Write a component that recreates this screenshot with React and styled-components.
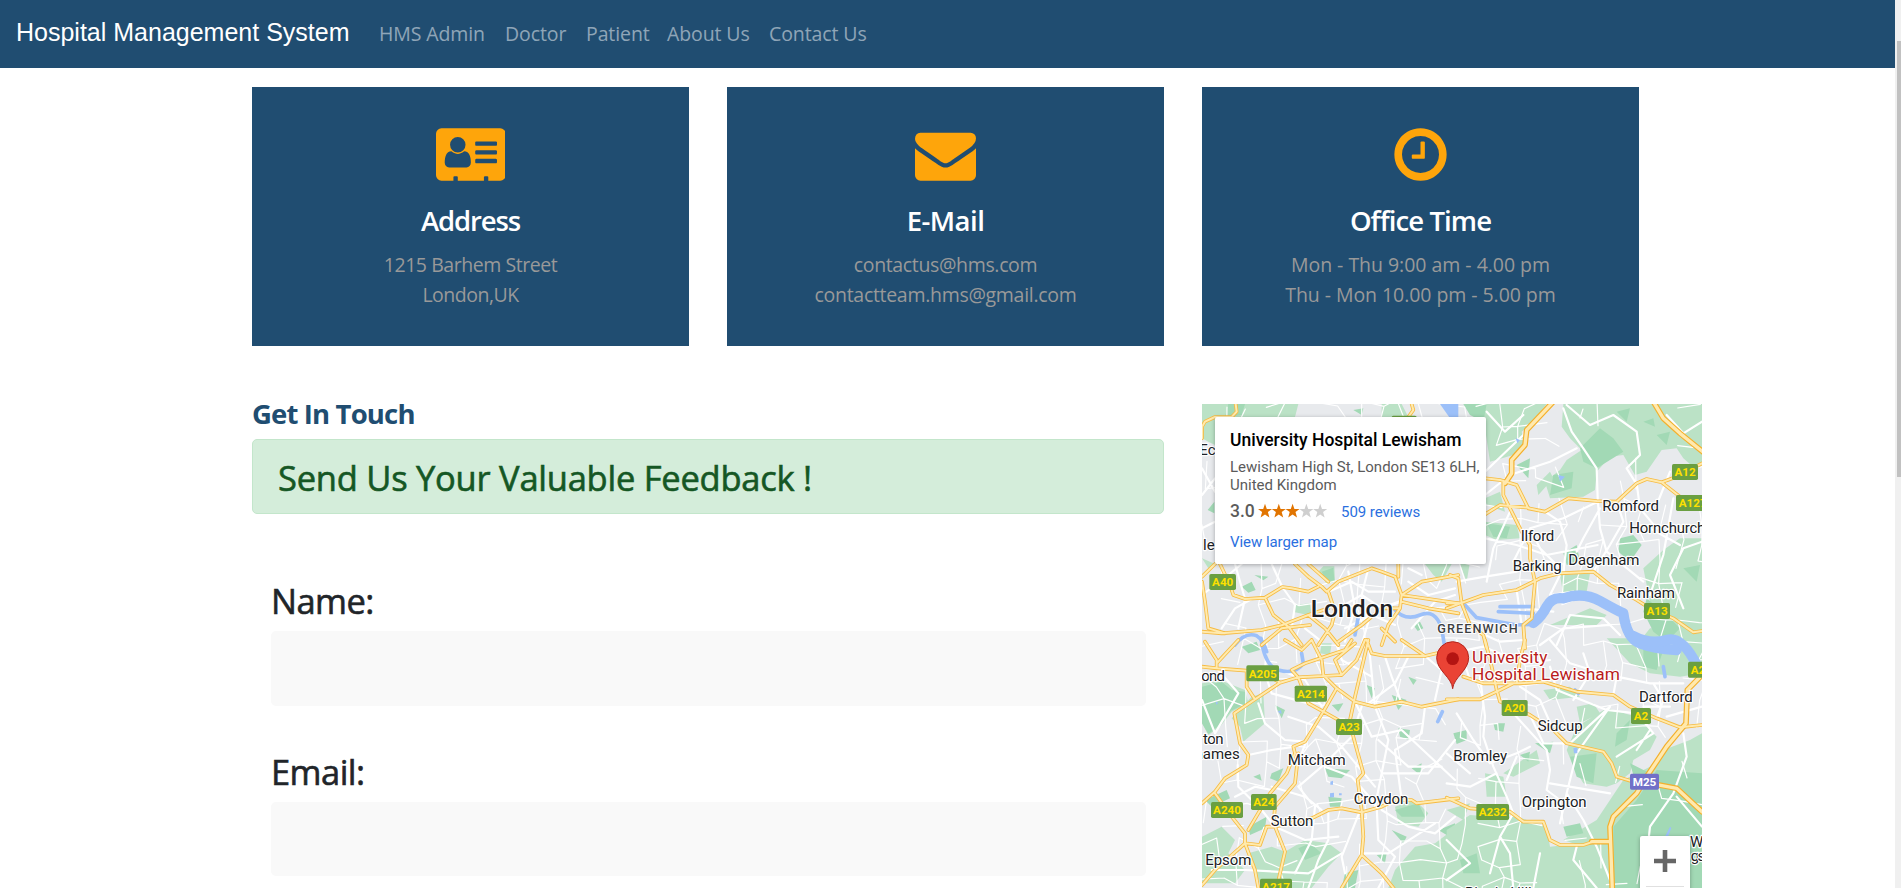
import React from "react";
import styled, { createGlobalStyle } from "styled-components";

const GlobalStyle = createGlobalStyle`
  *, *::before, *::after { box-sizing: border-box; }
  html, body { margin: 0; height: 100%; overflow: hidden; background: #fff; }
  body { font-family: "Open Sans", "Noto Sans", sans-serif; color: #212529; }
`;

const NAVY = "#204d71";

const Shell = styled.div`
  display: flex;
  height: 888px;
  overflow: hidden;
`;

const Page = styled.div`
  flex: 1;
  min-width: 0;
`;

const ScrollTrack = styled.div`
  width: 6px;
  padding: 41px 0 0 2px;
  background: #f0f0f0;
`;

const ScrollThumb = styled.div`
  height: 436px;
  background: #c1c1c1;
`;

const Navbar = styled.nav`
  display: flex;
  align-items: center;
  height: 68px;
  padding: 0 16px;
  background: ${NAVY};
`;

const Brand = styled.a`
  width: 363px;
  padding-bottom: 5px;
  font: 25px/38px "Liberation Sans", Arial, sans-serif;
  color: #fff;
  white-space: nowrap;
`;

const NavLink = styled.a`
  width: ${(p) => p.$width}px;
  font-size: 19.5px;
  line-height: 30px;
  letter-spacing: -0.1px;
  color: rgba(255, 255, 255, 0.5);
  white-space: nowrap;
`;

const Content = styled.main`
  margin-left: 252px;
  padding-top: 19px;
`;

const CardRow = styled.section`
  display: flex;
  gap: 38px;
`;

const InfoCard = styled.article`
  display: flex;
  flex-direction: column;
  align-items: center;
  width: 437px;
  height: 259px;
  padding-top: 37px;
  background: ${NAVY};
  text-align: center;
`;

const CardIcon = styled.svg`
  height: 61px;
  fill: #fea50b;
`;

const CardTitle = styled.h3`
  margin: 19px 0 12px;
  font-size: 27.5px;
  font-weight: 600;
  line-height: 34px;
  letter-spacing: ${(p) => p.$spacing}px;
  color: #fff;
`;

const CardLine = styled.p`
  margin: 0;
  font-size: 19.5px;
  line-height: 30px;
  letter-spacing: ${(p) => p.$spacing}px;
  color: #999;
`;

const LowerRow = styled.section`
  display: flex;
  gap: 38px;
`;

const FormColumn = styled.div`
  width: 912px;
  padding-top: 51px;
`;

const SectionTitle = styled.h2`
  margin: 0 0 8px;
  font-size: 27.5px;
  font-weight: 700;
  line-height: 34px;
  letter-spacing: -0.85px;
  color: ${NAVY};
`;

const Alert = styled.div`
  height: 75px;
  padding: 17px 25px;
  border: 1px solid #c3e6cb;
  border-radius: 5px;
  background: #d4edda;
  font-size: 34.5px;
  line-height: 42px;
  letter-spacing: -0.25px;
  -webkit-text-stroke: 0.6px #155724;
  color: #155724;
`;

const Form = styled.form`
  display: flex;
  flex-direction: column;
  gap: 45px;
  padding: 66px 18px 0 19px;
`;

const Field = styled.label`
  display: flex;
  flex-direction: column;
  gap: 9px;
  font-size: 34.5px;
  line-height: 42px;
  letter-spacing: -0.55px;
  -webkit-text-stroke: 0.6px #212529;
`;

const Input = styled.input`
  height: 74.5px;
  border: 0;
  border-radius: 5px;
  background: #f9f9f9;
`;

const MapFrame = styled.div`
  position: relative;
  width: 500px;
  height: 484px;
  margin-top: 58px;
  overflow: hidden;
  background: #e8eaed;
`;

const MapCanvas = styled.svg`
  display: block;
  font-family: Roboto, sans-serif;
`;

const PlaceCard = styled.div`
  position: absolute;
  left: 13px;
  top: 13px;
  width: 271px;
  height: 147px;
  padding: 11px 0 0 15px;
  border-radius: 2px;
  background: #fff;
  box-shadow: 0 1px 4px rgba(0, 0, 0, 0.3);
  font-family: Roboto, sans-serif;
  white-space: nowrap;
`;

const PlaceName = styled.div`
  font-size: 17.5px;
  font-weight: 500;
  line-height: 24px;
  color: #000;
`;

const PlaceAddress = styled.div`
  margin-top: 6px;
  font-size: 15px;
  line-height: 18px;
  color: #5b5b5b;
`;

const Rating = styled.div`
  display: flex;
  align-items: center;
  margin-top: 5px;
  height: 24px;
`;

const Score = styled.span`
  width: 28px;
  font-size: 17.5px;
  font-weight: 500;
  color: #5b5b5b;
`;

const Stars = styled.svg`
  width: 70px;
  height: 16px;
`;

const MapLink = styled.a`
  display: ${(p) => (p.$block ? "block" : "inline")};
  margin-left: ${(p) => (p.$block ? 0 : 13)}px;
  margin-top: ${(p) => (p.$block ? 9 : 2)}px;
  font-size: 15px;
  line-height: 20px;
  letter-spacing: -0.05px;
  color: #2a6fe0;
`;

const ZoomControl = styled.div`
  position: absolute;
  left: 438px;
  top: 432px;
  width: 50px;
  height: 101px;
  background: #fff;
  border-radius: 2px;
  box-shadow: 0 1px 4px rgba(0, 0, 0, 0.3);
`;

const ZoomButton = styled.div`
  display: grid;
  place-items: center;
  height: 51px;
  margin: 0 6px;
  border-bottom: 1px solid #e0e0e0;
`;

const icons = {
  address: {
    w: 2048,
    d: "M1024 1131q0-64-9-117.5t-29.5-103-60.5-78-97-28.5q-6 4-30 18t-37.5 21.5-35.5 17.5-43 14.5-42 4.5-42-4.5-43-14.5-35.5-17.5-37.5-21.5-30-18q-57 0-97 28.5t-60.5 78-29.5 103-9 117.5 37 106.5 91 42.5h512q54 0 91-42.5t37-106.5zm-157-520q0-94-66.5-160.5t-160.5-66.5-160.5 66.5-66.5 160.5 66.5 160.5 160.5 66.5 160.5-66.5 66.5-160.5zm925 509v-64q0-14-9-23t-23-9h-576q-14 0-23 9t-9 23v64q0 14 9 23t23 9h576q14 0 23-9t9-23zm0-260v-56q0-15-10.5-25.5t-25.5-10.5h-568q-15 0-25.5 10.5t-10.5 25.5v56q0 15 10.5 25.5t25.5 10.5h568q15 0 25.5-10.5t10.5-25.5zm0-252v-64q0-14-9-23t-23-9h-576q-14 0-23 9t-9 23v64q0 14 9 23t23 9h576q14 0 23-9t9-23zm256-320v1216q0 66-47 113t-113 47h-352v-96q0-14-9-23t-23-9h-64q-14 0-23 9t-9 23v96h-768v-96q0-14-9-23t-23-9h-64q-14 0-23 9t-9 23v96h-352q-66 0-113-47t-47-113v-1216q0-66 47-113t113-47h1728q66 0 113 47t47 113z",
  },
  mail: {
    w: 1792,
    d: "M1792 710v794q0 66-47 113t-113 47h-1472q-66 0-113-47t-47-113v-794q44 49 101 87 362 246 497 345 57 42 92.5 65.5t94.5 48 110 24.5h2q51 0 110-24.5t94.5-48 92.5-65.5q170-123 498-345 57-39 100-87zm0-294q0 79-49 151t-122 123q-376 261-468 325-10 7-42.5 31t-54 38.8-52 32.5-57.5 27-50 9h-2q-23 0-50-9t-57.5-27-52-32.5-54-38.8-42.5-31q-91-64-262-182.5t-205-142.5q-62-42-117-115.5t-55-136.5q0-78 41.5-130t118.5-52h1472q65 0 112.5 47t47.5 113z",
  },
  clock: {
    w: 1792,
    d: "M1024 544v448q0 14-9 23t-23 9h-320q-14 0-23-9t-9-23v-64q0-14 9-23t23-9h224v-352q0-14 9-23t23-9h64q14 0 23 9t9 23zm416 352q0-148-73-273t-198-198-273-73-273 73-198 198-73 273 73 273 198 198 273 73 273-73 198-198 73-273zm224 0q0 209-103 385.5t-279.5 279.5-385.5 103-385.5-103-279.5-279.5-103-385.5 103-385.5 279.5-279.5 385.5-103 385.5 103 279.5 279.5 103 385.5z",
  },
};

const cards = [
  { icon: "address", title: "Address", ts: -1.1, lines: [["1215 Barhem Street", -0.45], ["London,UK", -0.5]] },
  { icon: "mail", title: "E-Mail", ts: -0.55, lines: [["contactus@hms.com", -0.35], ["contactteam.hms@gmail.com", -0.3]] },
  { icon: "clock", title: "Office Time", ts: -0.9, lines: [["Mon - Thu 9:00 am - 4.00 pm", -0.03], ["Thu - Mon 10.00 pm - 5.00 pm", -0.06]] },
];

const links = [
  ["HMS Admin", 126],
  ["Doctor", 81],
  ["Patient", 81],
  ["About Us", 102],
  ["Contact Us", 100],
];

/* The map is drawn in four tiles, three drawing units to a pixel. */
const tiles = [
  {
    at: [-21, -27],
    light: "M21 27H310L300 66H60V150L40 140L21 130ZM560 27H620L640 66H560ZM372 528L385 514L418 514L420 560L395 568ZM300 630L345 625L350 662L300 652ZM690 507H770L740 560L715 540ZM21 490L60 507L40 520Z",
    dark: "M100 27H150L140 60L90 66ZM140 575L170 560L182 585L160 593ZM178 540L220 545L205 556ZM38 345L58 320V355ZM655 690L675 680L685 700L668 708ZM380 530L415 518L418 555L395 562ZM475 45L505 40L500 60Z",
    water: ["M595 640Q630 680 675 660T740 700L750 760", "M490 665L480 720", "M120 750Q150 710 185 722Q205 735 215 770"],
    lakes: "M735 27H790V70H765Z",
    streets: "M21 220L60 290M21 300L60 250M21 400L60 380M21 600L100 540L140 507M80 700L120 640L170 612M400 590L470 560L520 590L600 590M430 640L500 600L560 640L620 620M450 700L530 660L600 690M330 700L380 740M640 560L700 600L780 580M640 520L680 540M520 520L500 600L520 680L500 750M460 530L480 640L450 740M120 507L150 612L130 700M230 507L262 576L300 630L290 700M650 700L720 620L780 600",
    roads: "M21 130V95L30 80L60 66L110 66L125 50L122 27M650 27L655 45L640 66M21 545L60 507M21 560L30 620L40 700L90 715M75 507L105 570L115 600L150 612L210 608L262 576L290 580L340 590L370 575M210 608L235 660L280 695L320 750M300 507L340 545L380 575L395 590L430 560L530 520L560 530L600 545L620 600L615 640L580 690L560 750M340 507L400 560M610 507V545M620 600L790 625M620 620L700 640L790 655M620 600L680 560L790 540M262 690L340 660L400 640M340 660L390 700L430 750M200 750L260 700L345 690M21 710L80 715L200 705L262 690M400 590L420 650L410 690L370 750M430 740L500 690L560 640L615 640M560 700L600 740",
    thick: "",
  },
  {
    at: [744, -27],
    light: "M45 27H290L240 90L215 110L225 150L190 180L120 200L105 100ZM340 27H756V210L740 225L700 190L680 160L635 165L590 230L555 240L520 180L480 185L440 230L435 285L400 305L300 310L285 260L330 225L350 195L395 165L360 130L335 95ZM105 310L150 290L165 350L110 330ZM105 380L200 390L210 430L140 435L105 420ZM580 520L640 465L690 430L756 430V750H560L600 700L660 700L600 620ZM260 270L300 230L310 250L265 300ZM330 540L420 535L410 590L340 600ZM300 690L420 640L470 660L440 690ZM30 507L60 500L50 560Z",
    dark: "M40 27H110L100 80L60 60ZM390 160L450 100L490 130L520 170L440 220L400 200ZM310 240L370 230L365 280L300 300ZM580 80L610 70L615 95ZM500 50L540 40L530 80ZM620 120L660 110L650 150ZM110 385L180 395L170 430L130 425ZM340 475L380 450L390 500L350 510ZM510 430L550 420L575 450L540 500L505 470ZM590 610L650 660L690 700L650 740L610 710L580 650ZM200 210L240 190L235 250ZM700 520L750 510L740 560Z",
    water: ["M45 630L80 668L200 690L240 688L275 655", "M150 635H250M145 650L250 655"],
    river: "M250 684Q275 665 290 635T340 610Q400 590 450 618T520 655Q530 730 570 745T680 765",
    lakes: "M0 27H12L20 60L0 66ZM325 240L345 245L330 260ZM197 130L210 135L202 145Z",
    streets: "M105 230L220 120L300 27M340 40L365 110L400 160L440 220L443 310L450 400L470 470L580 560M350 30L420 90L490 60L560 110L570 180L530 220L555 260M443 320L340 370L240 400L190 500M285 350L330 380L350 450L340 530M450 340L400 430L380 470M500 320L520 380L480 450L430 530M560 265L570 340L620 400M620 330L660 230M670 310L640 480L600 600M240 400L270 460L330 520M105 430L200 450L290 480L443 450M180 350L130 460L110 560M20 560L105 545L200 530M200 585L215 690M330 540L300 600L370 590M700 640L660 540L700 460L756 440M320 750L360 660L460 670L510 720M270 750L340 700L480 690M105 300L180 240L300 200L380 160M650 60L700 115L756 80M600 400L690 450M110 50L165 110L220 60M60 700L150 740L220 735M230 640L310 650",
    roads: "M105 250L150 255L200 270L235 340L285 350L355 310L440 318L500 320L560 265L590 252L635 262L680 245L756 205M635 262L690 305L700 320M105 358L150 330L235 338M160 262V300L185 350L215 410L240 450V490L255 560L245 670L220 690L225 760M-10 640L100 600L200 585L270 550L330 535L430 530L480 570L560 615L600 640L670 670L730 712L756 708M0 540L25 550L35 625L60 690L100 720L110 760M-10 625L35 625",
    thick: "M310 20L230 105L225 150L185 195V235L165 265M610 20L640 70L690 115L770 180",
  },
  {
    at: [-21, 708],
    light: "M21 130L80 122L150 150L160 190L110 215L75 260L40 285L21 250ZM110 235L170 170L205 160L210 250L145 305L135 260ZM21 590L80 560L120 600L100 640L150 690L120 730H21ZM160 640L230 620L270 635L330 600L400 610L440 640L400 680L350 744H200ZM580 744L600 690L660 620L720 610L780 565V744ZM600 500L660 480L700 520L670 560L610 550ZM380 10L410 10L405 45L375 40Z",
    dark: "M140 20L185 5L195 30L160 40ZM21 140L80 125L110 150L150 155L155 190L108 212L70 258L40 282L21 250ZM30 480L95 450L105 475L50 500ZM515 135L540 145L530 175ZM640 110L665 120L655 135ZM610 265L645 270L640 300L615 290ZM590 165L635 180L610 210ZM175 410L195 402L200 422ZM230 400L265 385L250 425L225 415ZM400 470L440 475L435 500H405ZM160 560L215 530L210 565L165 585ZM650 385L680 370L675 405ZM590 570L635 590L625 610ZM240 195L270 210L260 235ZM545 645L575 640L570 670ZM600 510L670 490L690 530L620 530ZM390 385L465 390L440 415L400 410ZM410 195L445 190L430 215ZM310 625L345 610L380 640L330 660ZM730 570L780 550V600ZM450 700L490 690L480 744H440Z",
    water: ["M198 -5Q210 80 250 90Q300 105 325 70L320 40", "M728 245L742 215"],
    lakes: "M406 425l8-3v12h-8zM405 460l12-2v14h-12zM432 460l8 0v6h-8zM62 185l8 3-6 6zM248 215l10-5 2 12z",
    streets: "M65 85L130 160L60 280M190 190L210 250L270 300L330 305M215 0L210 100L230 160L340 190M230 80L330 120L380 200M280 230L370 260L440 320L540 440M350 260L320 340M160 345L230 330L300 320M128 375L130 440L200 510L240 560M230 440L330 470L380 510M500 200L470 290L380 380L310 440L350 490M540 200L580 300L560 400L540 500M480 185L530 290L620 270L780 420M520 0L540 200M570 50L590 110L620 190M640 50L600 130L520 190M550 300L640 380L740 380M560 400L700 400L780 300M690 48L740 90L720 180M390 380L470 410L540 490M545 500L550 600L600 650L550 744M560 510L640 560L720 580L780 530M500 500L440 650L450 700M400 520L400 600L370 660L340 744M440 640L340 700L150 690L50 690M240 560L330 600L430 590M620 480L600 330L680 280L690 200M500 640L580 640L720 550M120 470L180 440L230 450M21 180L60 280M420 0L440 60L530 110M360 500L350 600L300 700",
    roads: "M21 80L65 85L155 92L200 95L255 128M30 5L65 60V85M130 0L65 70M21 490L60 455L90 415L155 375L160 345L135 310L118 220L180 178L255 128L310 112L440 105L485 60L510 0M155 92V140L180 178M350 0L380 60L385 105L425 145L480 185L540 200L620 185L680 200L790 178M310 112L340 190L385 215L430 240M425 145L385 215L330 305L295 320L300 340L275 400L225 460L160 570M310 340L300 430L240 500L235 560M520 0L480 170L465 240L475 290L505 400L488 420L500 510L505 590L500 645L440 744M500 645L560 700L600 750M60 460L110 530L150 580L150 610L180 690L190 744M150 610L195 615L215 560L240 560L300 545L350 535L400 510L440 505L500 517L560 500L600 480L650 480L665 490L790 475M240 560L270 635L245 744M150 610L60 690L21 735M515 0L530 40L570 48L690 48L725 40M620 0L690 48M310 112L290 90L330 70L450 30L470 0M270 0L320 30L350 0M440 105L420 60L480 10",
    thick: "",
  },
  {
    at: [744, 708],
    light: "M380 260L470 205L560 230L620 290L600 330L550 360L540 400L500 430L470 440L400 430L370 380L350 330ZM756 280V744H480L400 620L340 600L440 540L520 420L600 380L640 330L720 300ZM-10 570L60 525L130 530L200 530L290 560L300 620L480 600V744H-10ZM105 400L160 410L170 470L110 470ZM470 -5H756V100L690 110L600 100L540 70ZM160 400L260 330L270 370L190 410ZM380 200L430 190L450 220L390 250ZM280 150L360 140L390 170L300 180ZM-10 510L60 490L40 540Z",
    dark: "M620 390L756 400V744H490V560L560 480ZM10 280L50 270L50 300L20 312ZM180 180L220 185L210 220L180 215ZM360 350L440 340L430 430L380 410ZM540 370L600 400L560 440ZM210 345L240 335L235 365ZM500 280L540 240L530 300L495 320ZM580 20L640 30L620 90L580 80ZM340 560L390 550L400 580L350 590ZM255 310L310 305L300 340ZM130 250L165 250L160 275L135 270ZM30 660L80 640L90 700L40 700Z",
    water: ["M640 80L645 110", "M375 150L385 160"],
    river: "M550 -12Q600 15 650 0T750 95",
    lakes: "M370 325l12-3v18h-10zM640 600l20-40 4 4-14 36z",
    streets: "M90 110L105 230L100 290L130 380L170 470L190 520L150 590L120 700M190 220L290 330L300 390L290 450L330 480M20 220L70 300L120 370L200 340L240 320M240 225L280 310L360 310L480 200M480 200L380 340L350 460L400 540L440 620L480 720M300 80L320 150L470 210L560 220M490 165L500 110L600 130L700 130M560 215L610 280L500 350M700 280L710 350L670 460L600 560L580 744M680 470L756 560M300 430L480 460M150 590L180 640L190 744M-10 600L60 670L-10 720M380 620L370 660L440 744M270 640L250 744M0 40L100 20L220 70L300 60M20 0L60 120M400 40L420 100L370 180M300 0L360 70L490 110M620 235L640 180L610 130M650 230L756 200M310 270L270 180L210 140M140 400L60 440L-10 430M200 350L170 420M350 460L330 550M580 200L660 200M560 330L600 270M-10 340L60 400",
    roads: "M40 110L100 130L210 130L280 125L380 155L490 165L540 200L620 235L690 262L756 255M-10 178H90L150 150L190 130M105 0L125 80L140 150L150 185L240 225L310 270L350 310L460 335L485 370L500 410L540 422M225 0L210 60L200 130M-10 473L60 505L180 515L220 545L280 545L300 600L330 615L400 615L430 605",
    thick: "M425 605H480M756 105L712 150L708 250L650 320L590 410L560 460L490 530L480 560L487 750M600 430L680 445L756 515",
  },
];

/* label, x, width (0 = natural), baseline, city */
const places = [
  ["Ec", -8, 0, 153, 0],
  ["le", 3, 0, 438, 0],
  ["London", 326, 248, 638, 1],
  ["Romford", 1201, 170, 321, 0],
  ["Hornchurch", 1282, 228, 388, 0],
  ["Ilford", 956, 101, 411, 0],
  ["Barking", 932, 147, 500, 0],
  ["Dagenham", 1099, 213, 483, 0],
  ["Rainham", 1245, 174, 583, 0],
  ["ond", -2, 71, 830, 0],
  ["ton", 3, 62, 1021, 0],
  ["hames", -22, 135, 1066, 0],
  ["Mitcham", 257, 174, 1084, 0],
  ["Croydon", 455, 164, 1199, 0],
  ["Sutton", 206, 128, 1266, 0],
  ["Epsom", 10, 138, 1383, 0],
  ["Dartford", 1311, 161, 895, 0],
  ["Sidcup", 1007, 135, 981, 0],
  ["Bromley", 754, 161, 1071, 0],
  ["Orpington", 959, 195, 1208, 0],
  ["W", 1464, 40, 1328, 0],
  ["gs", 1466, 44, 1371, 0],
  ["Biggin Hill", 789, 200, 1481, 0],
];

const shields = [
  ["A40", 22, 510, 80], ["", 569, 35, 75],
  ["A12", 1410, 180, 78], ["A127", 1422, 273, 100], ["A13", 1326, 597, 78],
  ["A205", 133, 784, 98], ["A214", 278, 845, 97], ["A23", 402, 945, 78],
  ["A24", 147, 1170, 77], ["A240", 27, 1194, 96], ["A217", 174, 1424, 96],
  ["A20", 899, 888, 78], ["A2", 1287, 912, 60], ["A232", 823, 1200, 98],
  ["M25", 1284, 1109, 87], ["A2", 1458, 773, 60],
];

/* Residential streets: a jittered lattice with a fixed seed. */
const sideStreets = (() => {
  let seed = 41;
  const rnd = () => {
    seed = (seed * 16807) % 2147483647;
    return seed / 2147483647;
  };
  const step = 60;
  const cols = 27;
  const rows = 26;
  const pts = [];
  for (let r = 0; r < rows; r++) {
    pts.push([]);
    for (let c = 0; c < cols; c++) {
      pts[r].push([Math.round(c * step - 20 + rnd() * 36), Math.round(r * step - 20 + rnd() * 36)]);
    }
  }
  let d = "";
  for (let r = 0; r < rows - 1; r++) {
    for (let c = 0; c < cols - 1; c++) {
      const rural = (c > 16 && r > 15) || (c > 17 && r < 5);
      const chance = rural ? 0.12 : 0.5;
      const p = pts[r][c];
      if (rnd() < chance) d += `M${p}L${pts[r][c + 1]}`;
      if (rnd() < chance) d += `M${p}L${pts[r + 1][c]}`;
    }
  }
  return d;
})();

const layer = (draw) =>
  tiles.map((t, i) => (
    <g key={i} transform={`translate(${t.at[0]} ${t.at[1]})`}>
      {draw(t)}
    </g>
  ));

function LondonMap() {
  return (
    <MapCanvas width="500" height="484" viewBox="0 0 1500 1452" fill="none" strokeLinejoin="round" strokeLinecap="round">
      {layer((t) => (
        <>
          <path d={t.light} fill="#bbe2c6" />
          <path d={t.dark} fill="#a2d9b5" />
        </>
      ))}
      <path d={sideStreets} stroke="#fff" strokeWidth="3.5" />
      {layer((t) => <path d={t.streets} stroke="#fff" strokeWidth="6.5" />)}
      {layer((t) => (
        <>
          <path d={t.water.join("")} stroke="#9cc0f9" strokeWidth="11" />
          {t.river && <path d={t.river} stroke="#9cc0f9" strokeWidth="31" />}
          <path d={t.lakes} fill="#9cc0f9" />
        </>
      ))}
      {layer((t) => <path d={t.roads} stroke="#f6bb42" strokeWidth="11" />)}
      {layer((t) => <path d={t.thick} stroke="#f4b02c" strokeWidth="17" />)}
      {layer((t) => <path d={t.roads} stroke="#ffeaae" strokeWidth="6" />)}
      {layer((t) => <path d={t.thick} stroke="#ffe9ae" strokeWidth="10" />)}
      {shields.map(([name, x, y, w], i) => {
        const motorway = name[0] === "M";
        return (
          <g key={i}>
            <rect x={x} y={y} width={w} height="48" rx="5" fill={motorway ? "#7170c8" : "#6a9f41"} />
            <text x={x + w / 2} y={y + 37} fill={motorway ? "#fff" : "#fde000"} fontSize="35" fontWeight="700" textAnchor="middle">
              {name}
            </text>
          </g>
        );
      })}
      {places.map(([name, x, w, y, city]) => (
        <text
          key={name}
          x={x}
          y={y}
          fill="#202124"
          stroke="#fff"
          strokeWidth="7"
          paintOrder="stroke"
          fontSize={city ? 74 : 45}
          fontWeight={city ? 500 : 400}
          textLength={w || undefined}
        >
          {name}
        </text>
      ))}
      <text x="706" y="687" fill="#3c4043" stroke="#fff" strokeWidth="6" paintOrder="stroke" fontSize="38" fontWeight="500" textLength="241">
        GREENWICH
      </text>
      <g fill="#b91c1c" stroke="#fff" strokeWidth="7" paintOrder="stroke" fontSize="52">
        <text x="810" y="776" textLength="226">University</text>
        <text x="810" y="828" textLength="444">Hospital Lewisham</text>
      </g>
      <path d="M752 853C750 820 704 800 704 761A48 48 0 0 1 800 761C800 800 755 820 752 853Z" fill="#ea4335" stroke="#b5241b" strokeWidth="3" />
      <circle cx="752" cy="764" r="19" fill="#b31412" />
    </MapCanvas>
  );
}

const STAR = "M7 0.2L8.8 5.4H14L9.9 8.6L11.4 14L7 10.9L2.6 14L4.1 8.6L0 5.4H5.2Z";

export default function App() {
  return (
    <>
      <GlobalStyle />
      <Shell>
        <Page>
          <Navbar>
            <Brand>Hospital Management System</Brand>
            {links.map(([label, width]) => (
              <NavLink key={label} $width={width}>{label}</NavLink>
            ))}
          </Navbar>
          <Content>
            <CardRow>
              {cards.map((c) => (
                <InfoCard key={c.title}>
                  <CardIcon viewBox={`0 0 ${icons[c.icon].w} 1792`}>
                    <path d={icons[c.icon].d} />
                  </CardIcon>
                  <CardTitle $spacing={c.ts}>{c.title}</CardTitle>
                  {c.lines.map(([text, spacing]) => (
                    <CardLine key={text} $spacing={spacing}>{text}</CardLine>
                  ))}
                </InfoCard>
              ))}
            </CardRow>
            <LowerRow>
              <FormColumn>
                <SectionTitle>Get In Touch</SectionTitle>
                <Alert>Send Us Your Valuable Feedback !</Alert>
                <Form>
                  <Field>Name:<Input type="text" /></Field>
                  <Field>Email:<Input type="email" /></Field>
                </Form>
              </FormColumn>
              <MapFrame>
                <LondonMap />
                <PlaceCard>
                  <PlaceName>University Hospital Lewisham</PlaceName>
                  <PlaceAddress>Lewisham High St, London SE13 6LH,<br />United Kingdom</PlaceAddress>
                  <Rating>
                    <Score>3.0</Score>
                    <Stars viewBox="0 0 70 16">
                      {[0, 1, 2, 3, 4].map((n) => (
                        <path key={n} d={STAR} transform={`translate(${n * 13.8} 0.5)`} fill={n < 3 ? "#e17400" : "#cfcfcf"} />
                      ))}
                    </Stars>
                    <MapLink>509 reviews</MapLink>
                  </Rating>
                  <MapLink $block>View larger map</MapLink>
                </PlaceCard>
                <ZoomControl>
                  <ZoomButton>
                    <svg width="22" height="22" viewBox="0 0 22 22" fill="#666">
                      <path d="M8.7 0H13.3V8.7H22V13.3H13.3V22H8.7V13.3H0V8.7H8.7Z" />
                    </svg>
                  </ZoomButton>
                </ZoomControl>
              </MapFrame>
            </LowerRow>
          </Content>
        </Page>
        <ScrollTrack><ScrollThumb /></ScrollTrack>
      </Shell>
    </>
  );
}
